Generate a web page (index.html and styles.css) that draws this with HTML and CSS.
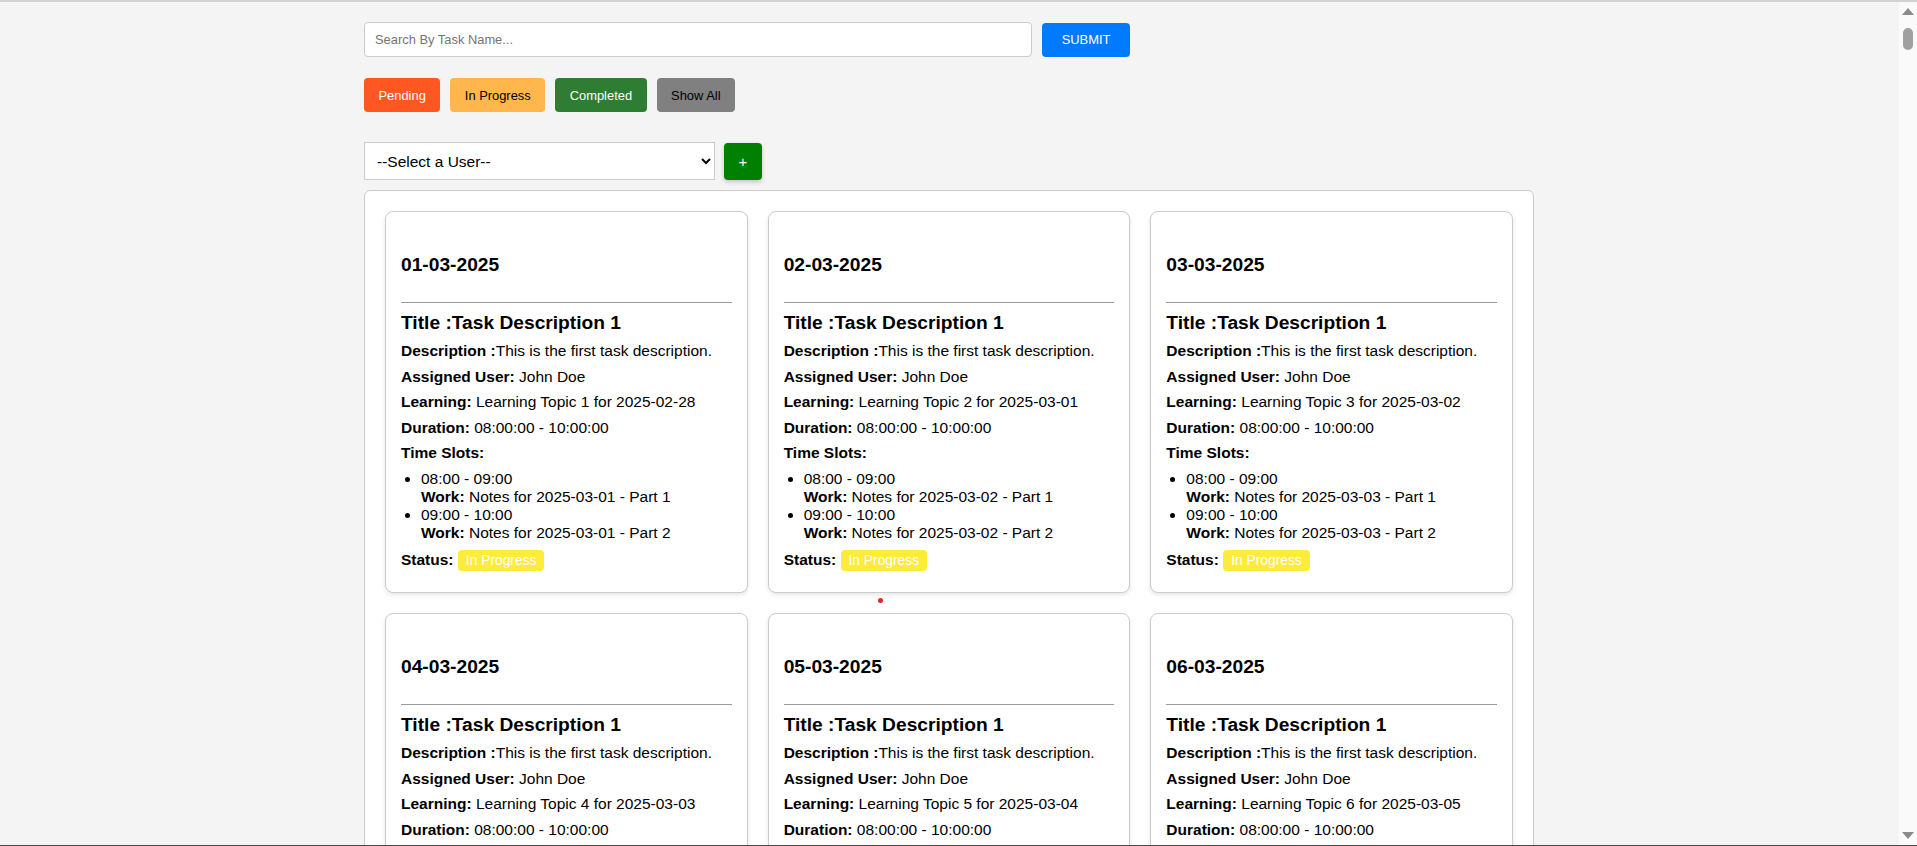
FILE: index.html
```html
<!DOCTYPE html>
<html lang="en">
<head>
<meta charset="utf-8">
<title>Task Board</title>
<link rel="stylesheet" href="styles.css">
</head>
<body>
<div class="page">
  <form class="search-row">
    <input class="search-input" type="text" placeholder="Search By Task Name...">
    <button type="button" class="btn-submit">SUBMIT</button>
  </form>

  <div class="filters">
    <button type="button" class="filter filter-pending">Pending</button>
    <button type="button" class="filter filter-progress">In Progress</button>
    <button type="button" class="filter filter-completed">Completed</button>
    <button type="button" class="filter filter-all">Show All</button>
  </div>

  <div class="user-row">
    <select class="user-select">
      <option>--Select a User--</option>
    </select>
    <button type="button" class="btn-add">+</button>
  </div>

  <div class="board">
    <span class="marker-dot"></span>

    <div class="card">
      <h3 class="card-date">01-03-2025</h3>
      <hr class="card-rule">
      <h3 class="card-title">Title :Task Description 1</h3>
      <p><b>Description :</b>This is the first task description.</p>
      <p><b>Assigned User:</b> John Doe</p>
      <p><b>Learning:</b> Learning Topic 1 for 2025-02-28</p>
      <p><b>Duration:</b> 08:00:00 - 10:00:00</p>
      <p class="slots-label"><b>Time Slots:</b></p>
      <ul class="slots">
        <li>08:00 - 09:00<br><b>Work:</b> Notes for 2025-03-01 - Part 1</li>
        <li>09:00 - 10:00<br><b>Work:</b> Notes for 2025-03-01 - Part 2</li>
      </ul>
      <p class="status"><b>Status:</b> <span class="badge">In Progress</span></p>
    </div>

    <div class="card">
      <h3 class="card-date">02-03-2025</h3>
      <hr class="card-rule">
      <h3 class="card-title">Title :Task Description 1</h3>
      <p><b>Description :</b>This is the first task description.</p>
      <p><b>Assigned User:</b> John Doe</p>
      <p><b>Learning:</b> Learning Topic 2 for 2025-03-01</p>
      <p><b>Duration:</b> 08:00:00 - 10:00:00</p>
      <p class="slots-label"><b>Time Slots:</b></p>
      <ul class="slots">
        <li>08:00 - 09:00<br><b>Work:</b> Notes for 2025-03-02 - Part 1</li>
        <li>09:00 - 10:00<br><b>Work:</b> Notes for 2025-03-02 - Part 2</li>
      </ul>
      <p class="status"><b>Status:</b> <span class="badge">In Progress</span></p>
    </div>

    <div class="card">
      <h3 class="card-date">03-03-2025</h3>
      <hr class="card-rule">
      <h3 class="card-title">Title :Task Description 1</h3>
      <p><b>Description :</b>This is the first task description.</p>
      <p><b>Assigned User:</b> John Doe</p>
      <p><b>Learning:</b> Learning Topic 3 for 2025-03-02</p>
      <p><b>Duration:</b> 08:00:00 - 10:00:00</p>
      <p class="slots-label"><b>Time Slots:</b></p>
      <ul class="slots">
        <li>08:00 - 09:00<br><b>Work:</b> Notes for 2025-03-03 - Part 1</li>
        <li>09:00 - 10:00<br><b>Work:</b> Notes for 2025-03-03 - Part 2</li>
      </ul>
      <p class="status"><b>Status:</b> <span class="badge">In Progress</span></p>
    </div>

    <div class="card">
      <h3 class="card-date">04-03-2025</h3>
      <hr class="card-rule">
      <h3 class="card-title">Title :Task Description 1</h3>
      <p><b>Description :</b>This is the first task description.</p>
      <p><b>Assigned User:</b> John Doe</p>
      <p><b>Learning:</b> Learning Topic 4 for 2025-03-03</p>
      <p><b>Duration:</b> 08:00:00 - 10:00:00</p>
      <p class="slots-label"><b>Time Slots:</b></p>
      <ul class="slots">
        <li>08:00 - 09:00<br><b>Work:</b> Notes for 2025-03-04 - Part 1</li>
        <li>09:00 - 10:00<br><b>Work:</b> Notes for 2025-03-04 - Part 2</li>
      </ul>
      <p class="status"><b>Status:</b> <span class="badge">In Progress</span></p>
    </div>

    <div class="card">
      <h3 class="card-date">05-03-2025</h3>
      <hr class="card-rule">
      <h3 class="card-title">Title :Task Description 1</h3>
      <p><b>Description :</b>This is the first task description.</p>
      <p><b>Assigned User:</b> John Doe</p>
      <p><b>Learning:</b> Learning Topic 5 for 2025-03-04</p>
      <p><b>Duration:</b> 08:00:00 - 10:00:00</p>
      <p class="slots-label"><b>Time Slots:</b></p>
      <ul class="slots">
        <li>08:00 - 09:00<br><b>Work:</b> Notes for 2025-03-05 - Part 1</li>
        <li>09:00 - 10:00<br><b>Work:</b> Notes for 2025-03-05 - Part 2</li>
      </ul>
      <p class="status"><b>Status:</b> <span class="badge">In Progress</span></p>
    </div>

    <div class="card">
      <h3 class="card-date">06-03-2025</h3>
      <hr class="card-rule">
      <h3 class="card-title">Title :Task Description 1</h3>
      <p><b>Description :</b>This is the first task description.</p>
      <p><b>Assigned User:</b> John Doe</p>
      <p><b>Learning:</b> Learning Topic 6 for 2025-03-05</p>
      <p><b>Duration:</b> 08:00:00 - 10:00:00</p>
      <p class="slots-label"><b>Time Slots:</b></p>
      <ul class="slots">
        <li>08:00 - 09:00<br><b>Work:</b> Notes for 2025-03-06 - Part 1</li>
        <li>09:00 - 10:00<br><b>Work:</b> Notes for 2025-03-06 - Part 2</li>
      </ul>
      <p class="status"><b>Status:</b> <span class="badge">In Progress</span></p>
    </div>
  </div>
</div>

<div class="scrollbar" aria-hidden="true">
  <div class="scroll-arrow scroll-up"></div>
  <div class="scroll-thumb"></div>
  <div class="scroll-track"></div>
  <div class="scroll-arrow scroll-down"></div>
</div>
<div class="window-edge" aria-hidden="true"></div>
</body>
</html>
```

FILE: styles.css
```css
* {
  box-sizing: border-box;
}

html {
  background: #f4f4f4;
}

body {
  margin: 0;
  padding-right: 19px;
  border-top: 2px solid #d2d2d2;
  background: #f4f4f4;
  font-family: "Liberation Sans", Arial, sans-serif;
  color: #000;
}

.page {
  width: 1170px;
  margin: 0 auto;
  padding-top: 20px;
  padding-bottom: 40px;
}

/* search */
.search-row {
  display: flex;
  align-items: center;
  gap: 10px;
  margin: 0;
}

.search-input {
  width: 668px;
  height: 35px;
  border: 1px solid #cccccc;
  border-radius: 4px;
  padding: 0 10px;
  background: #fff;
  font-family: "Liberation Sans", Arial, sans-serif;
  font-size: 12.9px;
  color: #000;
  outline: none;
}

.search-input::placeholder {
  color: #757575;
}

.btn-submit {
  width: 88px;
  height: 34px;
  border: 0;
  border-radius: 4px;
  background: #007bff;
  color: #fff;
  font-family: "Liberation Sans", Arial, sans-serif;
  font-size: 12.9px;
  padding: 0;
}

/* filters */
.filters {
  display: flex;
  gap: 10px;
  margin-top: 21px;
}

.filter {
  height: 34px;
  padding: 0 14.5px;
  border: 0;
  border-radius: 4px;
  font-family: "Liberation Sans", Arial, sans-serif;
  font-size: 12.9px;
}

.filter-pending {
  background: #ff5722;
  color: #fff;
}

.filter-progress {
  background: #ffb74d;
  color: #000;
}

.filter-completed {
  background: #2e7d32;
  color: #fff;
}

.filter-all {
  background: #808080;
  color: #000;
}

/* user select */
.user-row {
  display: flex;
  align-items: center;
  gap: 9px;
  margin-top: 30px;
}

.user-select {
  width: 351px;
  height: 38px;
  border: 1px solid #cccccc;
  border-radius: 0;
  background: #fff;
  padding: 0 8px;
  font-family: "Liberation Sans", Arial, sans-serif;
  font-size: 15.5px;
  color: #000;
}

.btn-add {
  width: 38px;
  height: 37px;
  border: 0;
  border-radius: 4px;
  background: #008000;
  color: #fff;
  box-shadow: 0 2px 4px rgba(0, 0, 0, 0.2);
  font-family: "Liberation Sans", Arial, sans-serif;
  font-size: 15px;
  padding: 0;
}

/* board */
.board {
  position: relative;
  margin-top: 10px;
  background: #fff;
  border: 1px solid #cccccc;
  border-radius: 6px;
  padding: 20px;
  display: grid;
  grid-template-columns: repeat(3, 1fr);
  gap: 20px;
}

.marker-dot {
  position: absolute;
  left: 513px;
  top: 407px;
  width: 5px;
  height: 5px;
  border-radius: 50%;
  background: #e8202a;
}

.card {
  background: #fff;
  border: 1px solid #cccccc;
  border-radius: 8px;
  padding: 15px;
  box-shadow: 0 2px 4px rgba(0, 0, 0, 0.1);
  font-size: 15.5px;
  line-height: normal;
}

.card-date {
  font-size: 19.2px;
  font-weight: bold;
  line-height: 22px;
  margin: 26.5px 0 0;
}

.card-rule {
  border: 0;
  border-top: 1px solid #9a9a9a;
  height: 0;
  margin: 26px 0 0;
}

.card-title {
  font-size: 19.2px;
  font-weight: bold;
  line-height: 22px;
  margin: 9px 0 8.5px;
}

.card p {
  margin: 7.6px 0;
}

.slots {
  margin: 7.6px 0;
  padding-left: 20px;
}

.card p.status {
  margin-bottom: 6.5px;
}

.badge {
  display: inline-block;
  background: #ffeb3b;
  color: #fff;
  font-size: 13.8px;
  line-height: 15px;
  padding: 3px 8px;
  border-radius: 4px;
}

/* browser chrome: scrollbar and bottom window edge */
.scrollbar {
  position: fixed;
  top: 2px;
  right: 0;
  bottom: 1px;
  width: 18px;
  background: #fafafa;
  display: flex;
  flex-direction: column;
  align-items: center;
  padding: 6px 0 6px;
  z-index: 10;
}

.scroll-arrow {
  flex: none;
  width: 12px;
  height: 7px;
  background: #8a8a8a;
}

.scroll-up {
  clip-path: polygon(50% 0, 100% 100%, 0 100%);
}

.scroll-down {
  clip-path: polygon(0 0, 100% 0, 50% 100%);
}

.scroll-thumb {
  flex: none;
  margin-top: 13px;
  width: 10px;
  height: 22px;
  border-radius: 5px;
  background: #a0a0a0;
}

.scroll-track {
  flex: 1;
}

.window-edge {
  position: fixed;
  left: 0;
  right: 0;
  bottom: 0;
  height: 1px;
  background: #4a4a4a;
  z-index: 11;
}
```
